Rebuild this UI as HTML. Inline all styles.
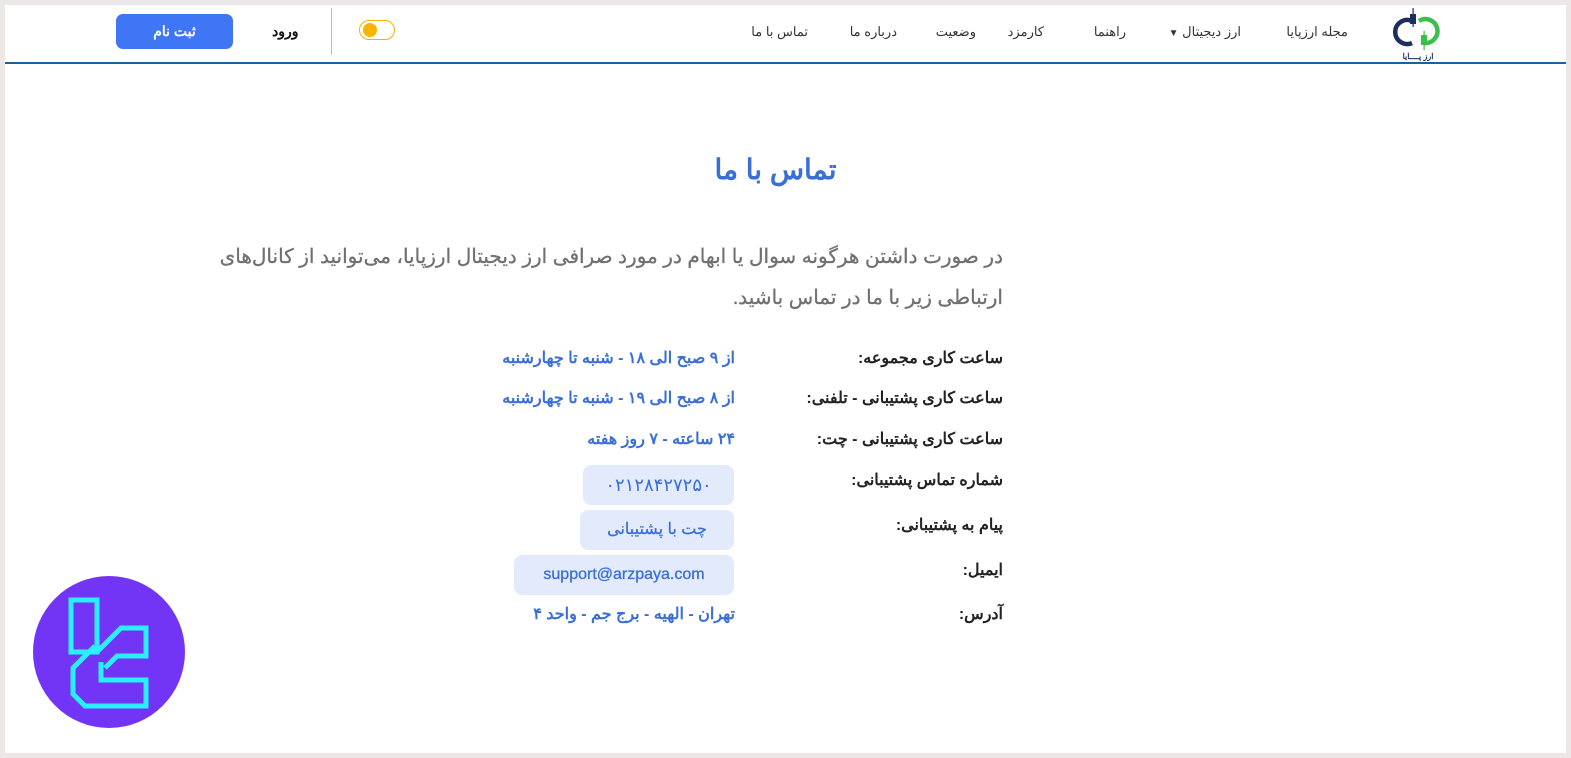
<!DOCTYPE html>
<html dir="rtl"><head><meta charset="utf-8"><style>
body{margin:0;width:1571px;height:758px;background:#ece8e8;font-family:"Liberation Sans","Noto Sans CJK SC",sans-serif;overflow:hidden;position:relative}
.page{position:absolute;left:5px;top:5px;width:1561px;height:748px;background:#fff}
.hdr{position:absolute;left:0;top:0;width:1561px;height:57px;border-bottom:2px solid #1f5f9a}
.a{position:absolute;font-size:13px;color:#333;top:19px;white-space:nowrap}
.lbl{position:absolute;right:563px;font-size:16px;font-weight:bold;color:#222;white-space:nowrap}
.val{position:absolute;right:831px;font-size:16px;font-weight:bold;color:#3a6fd8;white-space:nowrap}
.box{position:absolute;background:#e3eafb;border-radius:8px;color:#3a6fd8;font-size:16px;text-align:center;line-height:40px;height:40px}
</style></head><body><div class="page">
<div class="hdr">
<svg style="position:absolute;left:1388px;top:2px" width="50" height="54" viewBox="0 0 50 54"><path d="M19 14 A12 12 0 1 0 19 36" fill="none" stroke="#1d2f5e" stroke-width="4.5"/><path d="M26 14 A12 12 0 1 1 31 36" fill="none" stroke="#3cbf4a" stroke-width="4.5"/><rect x="17" y="7" width="6" height="10" fill="#1d2f5e"/><rect x="19.5" y="1" width="1.2" height="19" fill="#1d2f5e"/><rect x="28" y="28" width="6" height="10" fill="#3cbf4a"/><rect x="30.5" y="24" width="1.2" height="19" fill="#3cbf4a"/><text x="25" y="52" font-size="8" font-weight="bold" text-anchor="middle" fill="#1d2f5e">ارز پــــایا</text></svg>
<span class="a" style="right:218px">مجله ارزپایا</span>
<span class="a" style="right:325px">ارز دیجیتال <span style="font-size:10px">▼</span></span>
<span class="a" style="right:440px">راهنما</span>
<span class="a" style="right:522px">کارمزد</span>
<span class="a" style="right:590px">وضعیت</span>
<span class="a" style="right:669px">درباره ما</span>
<span class="a" style="right:758px">تماس با ما</span>
<div style="position:absolute;left:354px;top:15px;width:34px;height:18px;border:1px solid #f0b400;border-radius:10px"><div style="position:absolute;left:3px;top:2px;width:14px;height:14px;border-radius:50%;background:#f7b500"></div></div>
<div style="position:absolute;left:326px;top:3px;width:1px;height:47px;background:#bbb"></div>
<span style="position:absolute;left:267px;top:18px;font-size:14px;font-weight:bold;color:#111">ورود</span>
<div style="position:absolute;left:111px;top:9px;width:117px;height:35px;background:#3f76f5;border-radius:7px;color:#fff;font-size:14px;font-weight:bold;text-align:center;line-height:35px">ثبت نام</div>
</div>
<div style="position:absolute;left:0;width:1541px;top:148px;text-align:center;font-size:28px;font-weight:bold;color:#3a6fd8">تماس با ما</div>
<div style="position:absolute;right:563px;width:790px;top:232px;font-size:20px;line-height:41px;color:#707070;text-align:right;-webkit-text-stroke:0.3px #707070">در صورت داشتن هرگونه سوال یا ابهام در مورد صرافی ارز دیجیتال ارزپایا، می‌توانید از کانال‌های ارتباطی زیر با ما در تماس باشید.</div>
<span class="lbl" style="top:343px">ساعت کاری مجموعه:</span>
<span class="lbl" style="top:383px">ساعت کاری پشتیبانی - تلفنی:</span>
<span class="lbl" style="top:424px">ساعت کاری پشتیبانی - چت:</span>
<span class="lbl" style="top:465px">شماره تماس پشتیبانی:</span>
<span class="lbl" style="top:510px">پیام به پشتیبانی:</span>
<span class="lbl" style="top:555px">ایمیل:</span>
<span class="lbl" style="top:599px">آدرس:</span>
<span class="val" style="top:343px">از ۹ صبح الی ۱۸ - شنبه تا چهارشنبه</span>
<span class="val" style="top:383px">از ۸ صبح الی ۱۹ - شنبه تا چهارشنبه</span>
<span class="val" style="top:424px">۲۴ ساعته - ۷ روز هفته</span>
<div class="box" style="left:578px;top:460px;width:151px;font-size:18px">۰۲۱۲۸۴۲۷۲۵۰</div>
<div class="box" style="left:575px;top:505px;width:154px;-webkit-text-stroke:0.3px #3a6fd8">چت با پشتیبانی</div>
<div class="box" style="left:509px;top:550px;width:220px;-webkit-text-stroke:0.3px #3a6fd8" dir="ltr">support@arzpaya.com</div>
<span class="val" style="top:599px">تهران - الهیه - برج جم - واحد ۴</span>
</div>
<svg style="position:absolute;left:33px;top:576px" width="152" height="152" viewBox="0 0 152 152"><circle cx="76" cy="76" r="76" fill="#7335f5"/><g fill="none" stroke="#28f0ff" stroke-width="5"><path d="M38 24 H64 V76 L38 76 Z"/><path d="M64 76 L88 52 H113 V80 H84 L72 92"/><path d="M62 70 L40 92 V118 L52 130 H113 V104 H68 V86"/></g></svg>
</body></html>
